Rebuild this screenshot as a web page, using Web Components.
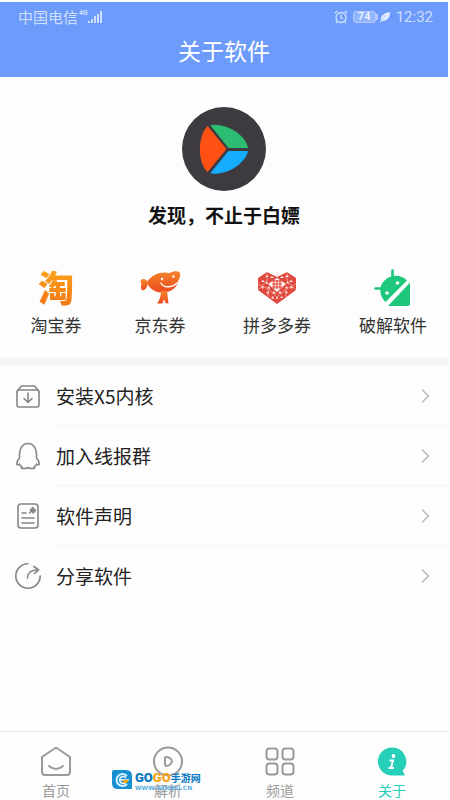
<!DOCTYPE html>
<html lang="zh-CN">
<head>
<meta charset="utf-8">
<meta name="viewport" content="width=device-width, initial-scale=1">
<title>关于软件</title>
<style>
html{background:#fff}
body{margin:0;font-family:"Noto Sans CJK SC",sans-serif;color:#333}
</style>
</head>
<body>
<about-page></about-page>
<script>
const define = (name, css, html) => customElements.define(name, class extends HTMLElement {
  constructor() {
    super();
    const t = document.createElement('template');
    t.innerHTML = `<style>*{box-sizing:border-box}svg{display:block}${css}</style>${html}`;
    this.attachShadow({mode: 'open'}).append(t.content.cloneNode(true));
  }
});

define('status-bar', `
:host{display:flex;justify-content:space-between;align-items:center;height:30px;padding:0 15px 0 18px;color:#cfdfff;font-size:15px;line-height:20px}
div{display:flex;align-items:center}
.net{font:bold 7px/8px Roboto,sans-serif;align-self:flex-start;margin:2px 0 0 1px}
.right{gap:5px}
.battery{border:1px solid #b5cbff;border-radius:3px;width:23px;height:12px;background:#93b4ff;color:#e6eeff;font:bold 11px/10px Roboto,sans-serif;text-align:center}
.power{display:flex;align-items:center}
time{font-family:Roboto,sans-serif;font-size:15px}
`, `
<div><span>中国电信</span><span class="net">4G</span>
<svg width="15" height="14" viewBox="0 0 15 14" fill="#cfdfff"><path d="M0 11h2v2H0zM3 9h2v4H3zM6 6h2v7H6zM9 4h2v9H9zM12 1h2v12h-2z"/></svg></div>
<div class="right">
<svg width="14" height="14" viewBox="0 0 14 14" fill="none" stroke="#cfdfff" stroke-width="1.3"><circle cx="7" cy="7.5" r="5"/><path d="M7 4.5v3.3l2 1M.8 3.3 3.3 1M13.2 3.3 10.7 1M3.3 11.5 2 13M10.7 11.5 12 13"/></svg>
<span class="power"><span class="battery">74</span>
<svg width="15" height="12" viewBox="0 0 15 12"><path d="M0 3h2v6H0z" fill="#b5cbff"/><path d="M5 9C4 5 8 2 14 1c0 6-3 9-8 9l-1 1.5L4 11z" fill="#e3ecff"/><path d="M5 10l5-6" stroke="#8bafff" stroke-width=".6"/></svg></span>
<time>12:32</time></div>`);

define('title-bar', `
:host{display:block;background:#6c9bfb}
h1{margin:0;padding-bottom:9px;font-size:23px;line-height:36px;font-weight:400;color:#fff;text-align:center}
`, `<status-bar></status-bar><h1><slot></slot></h1>`);

define('app-brand', `
:host{display:flex;flex-direction:column;align-items:center;gap:12px;padding-top:30px}
h2{margin:0;font-size:19px;line-height:24px;font-weight:700;color:#111}
`, `
<svg width="84" height="84" viewBox="0 0 84 84"><circle cx="42" cy="42" r="42" fill="#3d3a40"/>
<path d="M25.500 19.500C16 30 16 55 25.500 64.500L44 42z" fill="#ff5113" stroke="#ff5113" stroke-linejoin="round"/>
<path d="M29 18.500C43 17 62 26 65.500 40.500H46.500z" fill="#2dbd72" stroke="#2dbd72" stroke-linejoin="round"/>
<path d="M29 66C43 68 62 58 65.500 44.500H46.500z" fill="#17adff" stroke="#17adff" stroke-linejoin="round"/></svg>
<h2><slot></slot></h2>`);

define('shortcut-link', `
:host{display:block}
a{display:flex;flex-direction:column;align-items:center;gap:5px;color:#333;text-decoration:none;font-size:17px;line-height:24px;white-space:nowrap}
.icon{height:40px;display:flex;align-items:center;justify-content:center}
`, `<a href="#"><span class="icon"><slot name="icon"></slot></span><span><slot></slot></span></a>`);

define('taobao-logo', `
:host{display:block;font-size:36px;line-height:36px;padding-bottom:4px;font-weight:900;background:linear-gradient(#fba51c,#f37416);-webkit-background-clip:text;background-clip:text;color:transparent}
`, `淘`);

define('jd-logo', `:host{display:block}`, `
<svg width="42" height="36" viewBox="0 0 42 36"><defs><linearGradient id="g" x2="0" y2="1"><stop stop-color="#f5842c"/><stop offset="1" stop-color="#ee4a1d"/></linearGradient></defs>
<g fill="url(#g)"><path d="M8 12C13 4 22 1 31 3c3-2 7-2 9.500-1 1.500 3 .500 6-1.500 9-1 8-9 12-17 11.500C16 22 10 19 8 12z"/><path d="M9 13C8 9 4 8 2 10q-1.500 2 .500 4-1.500 4 1 6.500Q8 20 9 13z"/><path d="M22 21h6l1.500 12.500-3-.500-1.500-4-1.500 4.500H18q4-5 4-12.500z"/></g>
<path d="M22 13c2 5 11 5 16 0" fill="none" stroke="#fff" stroke-width="1.300" stroke-linecap="round"/><circle cx="23" cy="9" r="1.200" fill="#fff"/><circle cx="34.500" cy="6.500" r="1.200" fill="#fff"/></svg>`);

define('pdd-logo', `:host{display:block}`, `
<svg width="38" height="34" viewBox="0 0 38 34">
<path d="M9 1l10 5 10-5 9 6v12L19 33 0 19V7z" fill="#e0493f"/>
<path d="M19 7l9 6-9 8-9-8z" fill="#fff5f1"/>
<path d="M14 10h10M14 13h10M14 16h10M16 9v9M19 9v9M22 9v9" stroke="#e0493f" stroke-width="1.200"/>
<g fill="#fff0eb"><path d="M7 6l2-2 2 2zM12 7l2-2 2 2zM3 11l2-2 2 2zM7 12l2-2 1 3zM27 6l2-2 2 2zM22 7l2-2 2 2zM31 11l2-2 2 2zM28 12l2-2 1 3zM3 16l3-1-1 3zM9 17l2-2 1 3zM27 17l2-2 1 3zM32 15l3 1-2 2zM8 22l3-2v3zM14 22l2-2 2 3zM20 22l2-2 2 3zM27 20l3 1-2 2zM13 27l2-2 1 3zM18 28l1-3 1 3zM22 27l2-2 1 2z"/></g>
<path d="M0 13l10 5 9 8 9-8 10-5M9 1v9L0 19M29 1v9l9 9M10 18v8M28 18v8M19 1v6" fill="none" stroke="#f7b1a8" stroke-width=".7"/></svg>`);

define('android-logo', `:host{display:block}`, `
<svg width="38" height="38" viewBox="0 0 38 38" fill="#1dc77c">
<path d="M18.500 1.500v10M1.500 19.500h10" stroke="#1dc77c" stroke-width="2.600" stroke-linecap="round"/>
<path d="M11.500 33C5 27 4.500 17 10.500 11.500 16 5.500 27 5 33 11.500z"/><path d="M36 13.500v21q0 2.500-2.500 2.500H14z"/>
<circle cx="23.500" cy="14" r="1.800" fill="#fff"/><circle cx="13" cy="24" r="1.800" fill="#fff"/></svg>`);

define('menu-row', `
:host{display:block}
button{display:flex;align-items:center;width:100%;height:60px;padding:0 14px;border:0;background:none;font:inherit;color:#222;font-size:19px;line-height:28px;text-align:left}
.icon{width:28px;margin-right:14px;flex:none}
.text{flex:1;align-self:stretch;display:flex;align-items:center;justify-content:space-between;border-bottom:1px solid #f4f4f4;margin-right:-14px;padding-right:17px}
:host(:last-child) .text{border-color:transparent}
`, `<button type="button"><span class="icon"><slot name="icon"></slot></span><span class="text"><span><slot></slot></span>
<svg width="11" height="16" viewBox="0 0 11 16" fill="none" stroke="#bdbdbd" stroke-width="1.600"><path d="M2 1.500 8.500 8 2 14.500"/></svg></span></button>`);

const glyph = inner => `<svg width="28" height="28" viewBox="0 0 28 28" fill="none" stroke="#85858a" stroke-width="1.600" stroke-linecap="round" stroke-linejoin="round">${inner}</svg>`;
define('icon-install', `:host{display:block}`, glyph('<rect x="3" y="8" width="22" height="17" rx="2"/><path d="M4 8 7.500 4h13L24 8M14 11v9M10 16.500l4 4 4-4"/>'));
define('icon-penguin', `:host{display:block}`, glyph('<path d="M5.500 16C2 20 2 25 5.500 22M22.500 16c3.500 4 3.500 9 0 6M5.500 16C5 7 8 1.500 14 1.500S23 7 22.500 16M5.500 22c.500 2 1.500 2.500 2.500 3-2.500 2 4 2 6 .500 2 1.500 8.500 1.500 6-.500 1-.500 2-1 2.500-3"/>'));
define('icon-note', `:host{display:block}`, glyph('<rect x="4" y="2" width="20" height="24" rx="3"/><path d="M8 11h4M8 16h12M8 21h12M15.500 11l2-2"/><path d="M18.500 5.500l3 3-1 .5-1 2-3-3 1.500-1z" fill="#85858a"/>'));
define('icon-share', `:host{display:block}`, glyph('<path d="M14 1.800A12.200 12.200 0 1 0 26.200 14M13.500 16c0-5 3-8 10-8"/><path d="M20 4.500 24.500 8 20.500 11.500"/>'));

define('tab-item', `
:host{display:block;flex:1;color:#9a9a9a}
:host([current]){color:#25cfb8}
a{display:flex;flex-direction:column;align-items:center;gap:2px;padding-top:14px;font-size:14px;line-height:20px;color:inherit;text-decoration:none}
`, `<a href="#"><slot name="icon"></slot><span><slot></slot></span></a>`);
const tab = inner => `<svg width="32" height="32" viewBox="0 0 32 32" fill="none" stroke="#9a9a9a" stroke-width="2" stroke-linecap="round" stroke-linejoin="round">${inner}</svg>`;
define('icon-home', `:host{display:block}`, tab('<path d="M2 11 14.500 2.500q1.500-1 3 0L30 11v15q0 3-3 3H5q-3 0-3-3zM9 20q7 6 14 0"/>'));
define('icon-play', `:host{display:block}`, tab('<circle cx="16" cy="15.500" r="14"/><path d="M13 12.500q0-2 2-1.500c4 .5 6 4 4 6.500q-2 2.500-4.500 2.500-1.500 0-1.500-2z"/>'));
define('icon-grid', `:host{display:block}`, tab('<rect x="2.500" y="2.500" width="11" height="11" rx="3"/><rect x="18.500" y="2.500" width="11" height="11" rx="3"/><rect x="2.500" y="17.500" width="11" height="11" rx="3"/><rect x="18.500" y="17.500" width="11" height="11" rx="3"/>'));
define('icon-info', `:host{display:block}`, `
<svg width="32" height="32" viewBox="0 0 32 32"><path d="M16 1.500a14 14 0 0 0 0 28h12q1 0 .500-1.200L26.500 25A14 14 0 0 0 16 1.500z" fill="#25cfb8"/><circle cx="17.500" cy="10" r="1.900" fill="#fff"/><path d="M13.500 14.500h3.500l-2 7.500h3M12.500 22h3" fill="none" stroke="#fff" stroke-width="2"/></svg>`);

define('site-mark', `
:host{display:flex;align-items:flex-start;gap:3px;white-space:nowrap}
.words{display:flex;flex-direction:column}
.name{display:flex;align-items:center;height:15px;font-family:Roboto,sans-serif;font-size:13px;font-weight:900;color:#0879c0}
.name b{color:#f9a214;font-weight:900}
.cn{font:700 10px/15px "Noto Sans CJK SC",sans-serif}
.url{font:700 6px/6px "DejaVu Sans",sans-serif;color:#5aaee0}
`, `
<svg width="20" height="20" viewBox="0 0 20 20"><path d="M2 0h12q6 0 6 6v13H6q-6 0-6-6V2q0-2 2-2z" fill="#168fd3"/><path d="M15 6a6 6 0 1 0 0 8" fill="none" stroke="#d5f1ff" stroke-width="2"/><path d="M8 10h9M14 8a3.500 3.500 0 1 0 0 4" fill="none" stroke="#e9f8ff" stroke-width="1.500"/><path d="M11 10h6l-2 3h-4z" fill="#f9a214"/></svg>
<span class="words"><span class="name">GO<b>GO</b><span class="cn">手游网</span></span><span class="url">WWW.GOGEU.CN</span></span>`);

define('tab-bar', `
:host{display:block;position:relative;margin-top:auto;border-top:1px solid #e9e9e9}
nav{display:flex}
site-mark{position:absolute;left:25%;top:38px}
`, `<nav><slot></slot></nav><site-mark></site-mark>`);

define('about-page', `
:host{display:flex;flex-direction:column;min-height:100vh;box-sizing:border-box;padding:2px 2px 0 0;background:linear-gradient(#fff 2px,#fdfdfd 2px)}
.shortcuts{display:grid;grid-template-columns:104fr 104fr 130fr 102fr;padding:41px 4px 21px}
.list{border-top:8px solid #f5f4f6}
`, `
<title-bar>关于软件</title-bar>
<app-brand>发现，不止于白嫖</app-brand>
<div class="shortcuts">
<shortcut-link><taobao-logo slot="icon"></taobao-logo>淘宝券</shortcut-link>
<shortcut-link><jd-logo slot="icon"></jd-logo>京东券</shortcut-link>
<shortcut-link><pdd-logo slot="icon"></pdd-logo>拼多多券</shortcut-link>
<shortcut-link><android-logo slot="icon"></android-logo>破解软件</shortcut-link>
</div>
<div class="list">
<menu-row><icon-install slot="icon"></icon-install>安装X5内核</menu-row>
<menu-row><icon-penguin slot="icon"></icon-penguin>加入线报群</menu-row>
<menu-row><icon-note slot="icon"></icon-note>软件声明</menu-row>
<menu-row><icon-share slot="icon"></icon-share>分享软件</menu-row>
</div>
<tab-bar>
<tab-item><icon-home slot="icon"></icon-home>首页</tab-item>
<tab-item><icon-play slot="icon"></icon-play>解析</tab-item>
<tab-item><icon-grid slot="icon"></icon-grid>频道</tab-item>
<tab-item current><icon-info slot="icon"></icon-info>关于</tab-item>
</tab-bar>`);
</script>
</body>
</html>
